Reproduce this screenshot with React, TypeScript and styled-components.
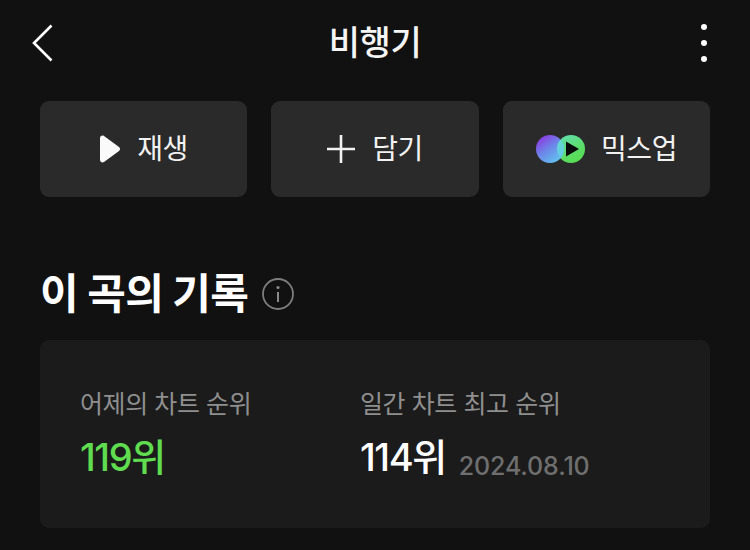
import styled, { createGlobalStyle } from 'styled-components';

const GlobalStyle = createGlobalStyle`
  html, body {
    margin: 0;
    padding: 0;
    background: #111111;
  }
  body {
    font-family: Inter, "Noto Sans CJK KR", sans-serif;
  }
`;

const Page = styled.div`
  width: 750px;
  height: 550px;
  overflow: hidden;
  padding: 0 40px;
  box-sizing: border-box;
  background: #111111;
  color: #fff;
`;

const Header = styled.header`
  height: 85px;
  margin-bottom: 16px;
  display: grid;
  grid-template-columns: 1fr auto 1fr;
  align-items: center;
`;

const BackSlot = styled.div`
  justify-self: start;
  margin-left: -9px;
`;

const MoreSlot = styled.div`
  justify-self: end;
  margin-right: 1px;
`;

const Glyph = styled.svg`
  display: block;
  flex: none;
`;

const Title = styled.h1`
  margin: 0;
  font-size: 34px;
  line-height: 42px;
  font-weight: 500;
  letter-spacing: -0.5px;
  color: #f5f5f5;
`;

const Actions = styled.div`
  display: grid;
  grid-template-columns: 207px 208px 207px;
  column-gap: 24px;
`;

const ActionButton = styled.button<{ $gap?: number }>`
  height: 96px;
  border: 0;
  border-radius: 9px;
  background: #2a2a2a;
  color: #f2f2f2;
  font: inherit;
  font-size: 28px;
  line-height: 36px;
  letter-spacing: -0.4px;
  display: flex;
  align-items: center;
  justify-content: center;
  gap: ${props => props.$gap ?? 16}px;
  padding: 0;
`;

const SectionHeading = styled.div`
  margin-top: 70px;
  display: flex;
  align-items: center;
  gap: 14px;
`;

const SectionTitle = styled.h2`
  margin: 0;
  font-size: 42px;
  line-height: 54px;
  font-weight: 700;
  letter-spacing: -0.7px;
`;

const RecordCard = styled.section`
  margin-top: 19px;
  height: 188px;
  border-radius: 9px;
  background: #1b1b1b;
  padding: 45px 40px 0;
  box-sizing: border-box;
  display: grid;
  grid-template-columns: 280px 1fr;
`;

const Label = styled.div`
  font-size: 25px;
  line-height: 38px;
  color: #8f8f8f;
  letter-spacing: -0.42px;
`;

const ValueRow = styled.div`
  margin-top: 11px;
  display: flex;
  align-items: flex-end;
  gap: 13px;
`;

const Rank = styled.div<{ $color: string }>`
  font-size: 38px;
  line-height: 46px;
  font-weight: 500;
  letter-spacing: -1.4px;
  color: ${props => props.$color};
`;

const RankDate = styled.span`
  font-size: 25px;
  line-height: 28px;
  font-weight: 500;
  letter-spacing: -0.15px;
  color: #6f6f6f;
`;

const BackIcon = () => (
  <Glyph width="22" height="38" viewBox="0 0 22 38" fill="none">
    <path d="M20.500 1.500 3 19l17.500 17.500" stroke="#fff" strokeWidth="2.600" />
  </Glyph>
);

const MoreIcon = () => (
  <Glyph width="10" height="42" viewBox="0 0 10 42" fill="#fff">
    <circle cx="5" cy="5" r="3" />
    <circle cx="5" cy="21" r="3" />
    <circle cx="5" cy="37" r="3" />
  </Glyph>
);

const PlayIcon = () => (
  <Glyph width="22" height="28" viewBox="0 0 22 28">
    <path
      d="M1 3.200C1 1 3.200-.1 5 1l15 11c1.400 1 1.400 3 0 4L5 27c-1.800 1.100-4 0-4-2.200Z"
      fill="#fafafa"
    />
  </Glyph>
);

const PlusIcon = () => (
  <Glyph width="28" height="28" viewBox="0 0 28 28">
    <path d="M14 0v28M0 14h28" stroke="#f2f2f2" strokeWidth="2.600" />
  </Glyph>
);

const MixupIcon = () => (
  <Glyph width="49" height="28" viewBox="0 0 49 28">
    <defs>
      <linearGradient id="mixLeft" x1="0.2" y1="0.05" x2="0.85" y2="0.95">
        <stop offset="0" stopColor="#8a3be0" />
        <stop offset="0.45" stopColor="#6c86e8" />
        <stop offset="1" stopColor="#62c8f0" />
      </linearGradient>
      <linearGradient id="mixRight" x1="0.1" y1="0" x2="0.7" y2="1">
        <stop offset="0" stopColor="#62dcb4" />
        <stop offset="0.6" stopColor="#5cdd6c" />
        <stop offset="1" stopColor="#58dc50" />
      </linearGradient>
      <linearGradient id="mixRibbon" gradientUnits="userSpaceOnUse" x1="21" y1="24" x2="27" y2="4">
        <stop offset="0" stopColor="#64c4f0" />
        <stop offset="1" stopColor="#64e0c8" />
      </linearGradient>
      <clipPath id="mixOverlap">
        <circle cx="35" cy="14" r="14" />
      </clipPath>
    </defs>
    <circle cx="35" cy="14" r="14" fill="url(#mixRight)" />
    <circle cx="14" cy="14" r="14" fill="url(#mixLeft)" />
    <circle cx="14" cy="14" r="14" fill="url(#mixRibbon)" clipPath="url(#mixOverlap)" />
    <path d="M30 6.500 43 14 30 21.500Z" fill="#0b0b0b" />
  </Glyph>
);

const InfoIcon = () => (
  <Glyph width="32" height="32" viewBox="0 0 32 32" fill="none">
    <circle cx="16" cy="16" r="15" stroke="#7d7d7d" strokeWidth="1.800" />
    <circle cx="16" cy="9.500" r="1.600" fill="#8a8a8a" />
    <path d="M16 14v10" stroke="#8a8a8a" strokeWidth="2" />
  </Glyph>
);

type RecordProps = {
  label: string;
  rank: string;
  color: string;
  date?: string;
};

const RecordItem = ({ label, rank, color, date }: RecordProps) => (
  <div>
    <Label>{label}</Label>
    <ValueRow>
      <Rank $color={color}>{rank}</Rank>
      {date && <RankDate>{date}</RankDate>}
    </ValueRow>
  </div>
);

export default function App() {
  return (
    <Page>
      <GlobalStyle />
      <Header>
        <BackSlot>
          <BackIcon />
        </BackSlot>
        <Title>비행기</Title>
        <MoreSlot>
          <MoreIcon />
        </MoreSlot>
      </Header>

      <Actions>
        <ActionButton>
          <PlayIcon />
          재생
        </ActionButton>
        <ActionButton $gap={17}>
          <PlusIcon />
          담기
        </ActionButton>
        <ActionButton>
          <MixupIcon />
          믹스업
        </ActionButton>
      </Actions>

      <SectionHeading>
        <SectionTitle>이 곡의 기록</SectionTitle>
        <InfoIcon />
      </SectionHeading>

      <RecordCard>
        <RecordItem label="어제의 차트 순위" rank="119위" color="#5fdc4f" />
        <RecordItem label="일간 차트 최고 순위" rank="114위" color="#ffffff" date="2024.08.10" />
      </RecordCard>
    </Page>
  );
}
